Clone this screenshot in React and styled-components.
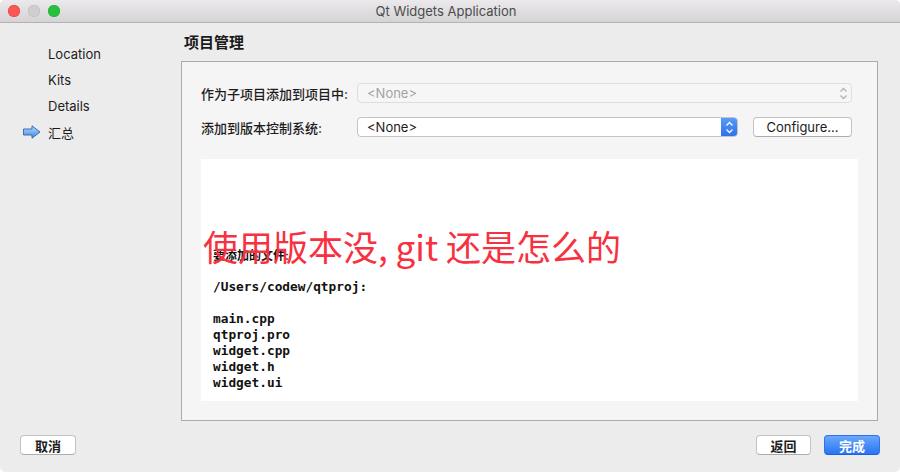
import React from "react";
import styled, { createGlobalStyle } from "styled-components";

const GlobalStyle = createGlobalStyle`
  html, body {
    margin: 0;
    padding: 0;
    background: #ffffff;
  }
  body {
    font-family: "Inter", "Noto Sans CJK SC", sans-serif;
    font-size: 13px;
    color: #1c1c1c;
  }
`;

const Window = styled.div`
  width: 900px;
  height: 472px;
  display: flex;
  flex-direction: column;
  background: #ececec;
  border-radius: 5px;
  overflow: hidden;
`;

const TitleBar = styled.div`
  height: 22px;
  flex: none;
  display: flex;
  align-items: center;
  background: linear-gradient(#ebe9eb, #d5d3d5);
  border-bottom: 1px solid #b3b1b3;
`;

const Lights = styled.div`
  display: flex;
  gap: 8px;
  padding-left: 8px;
`;

const Light = styled.span`
  width: 12px;
  height: 12px;
  border-radius: 50%;
  background: ${({ color }) => color};
  box-shadow: inset 0 0 0 0.5px ${({ edge }) => edge};
`;

const Title = styled.div`
  flex: 1;
  text-align: center;
  margin-right: 68px;
  color: #4b4b4b;
  font-size: 13px;
`;

const Main = styled.div`
  flex: 1;
  display: flex;
  min-height: 0;
`;

const Sidebar = styled.div`
  width: 181px;
  flex: none;
  padding-top: 18px;
  display: flex;
  flex-direction: column;
`;

const NavItem = styled.div`
  height: 26px;
  display: flex;
  align-items: center;
`;

const NavMarker = styled.div`
  width: 48px;
  display: flex;
  padding-left: 23px;
  box-sizing: border-box;
`;

const Content = styled.div`
  flex: 1;
  display: flex;
  flex-direction: column;
  margin-right: 22px;
`;

const Heading = styled.div`
  height: 20px;
  line-height: 20px;
  padding: 10px 0 0 3px;
  margin-bottom: 8px;
  font-size: 15px;
  font-weight: 700;
  color: #1a1a1a;
`;

const Panel = styled.div`
  height: 361px;
  box-sizing: border-box;
  border: 1px solid #ababab;
  background: #f5f5f5;
  padding: 21px 19px 19px 19px;
  display: flex;
  flex-direction: column;
`;

const FormRow = styled.div`
  display: flex;
  align-items: center;
  height: 20px;
  margin-bottom: ${({ last }) => (last ? "22px" : "14px")};
  padding-right: 6px;
`;

const Label = styled.div`
  width: 156px;
  flex: none;
  font-weight: 500;
  color: #1c1c1c;
`;

const Combo = styled.div`
  flex: ${({ width }) => (width ? "none" : 1)};
  width: ${({ width }) => (width ? `${width}px` : "auto")};
  height: 20px;
  box-sizing: border-box;
  display: flex;
  align-items: center;
  border-radius: 4px;
  border: 1px solid ${({ disabled }) => (disabled ? "#dedede" : "#c4c4c4")};
  background: ${({ disabled }) => (disabled ? "#f6f6f6" : "#ffffff")};
  color: ${({ disabled }) => (disabled ? "#a3a3a3" : "#1c1c1c")};
  overflow: hidden;
`;

const ComboText = styled.span`
  flex: 1;
  padding-left: 9px;
`;

const Stepper = styled.span`
  width: 17px;
  height: 20px;
  flex: none;
  display: flex;
  align-items: center;
  justify-content: center;
  margin-right: -1px;
  background: ${({ active }) =>
    active ? "linear-gradient(#5b9cf9, #2a6ff0)" : "transparent"};
`;

const Button = styled.button`
  height: 20px;
  padding: 0;
  width: ${({ w }) => w}px;
  box-sizing: border-box;
  font-family: inherit;
  font-size: 13px;
  font-weight: ${({ cjk }) => (cjk ? 600 : 400)};
  color: ${({ primary }) => (primary ? "#ffffff" : "#1c1c1c")};
  border-radius: 4px;
  border: 1px solid ${({ primary }) => (primary ? "#2d72ee" : "#c3c3c3")};
  border-bottom-color: ${({ primary }) => (primary ? "#1d5fe0" : "#adadad")};
  background: ${({ primary }) =>
    primary ? "linear-gradient(#6aa8fa, #2a74f4)" : "#ffffff"};
  margin-left: ${({ ml }) => ml || 0}px;
`;

const TextArea = styled.div`
  flex: 1;
  background: #ffffff;
  padding: 89px 0 0 12px;
  position: relative;
`;

const FilesCaption = styled.div`
  font-size: 12px;
  line-height: 16px;
  font-weight: 600;
  color: #111;
  margin-bottom: 15px;
`;

const FileList = styled.pre`
  margin: 0;
  font-family: "DejaVu Sans Mono", monospace;
  font-size: 12.8px;
  line-height: 16px;
  font-weight: 600;
  color: #111;
`;

const Annotation = styled.div`
  position: absolute;
  left: 2px;
  top: 66px;
  font-family: "Noto Sans CJK SC", sans-serif;
  font-size: 35px;
  line-height: 42px;
  color: #f7313f;
  white-space: nowrap;
`;

const Footer = styled.div`
  height: 51px;
  flex: none;
  display: flex;
  align-items: flex-start;
  padding: 14px 20px 0 20px;
  box-sizing: border-box;
`;

const Spacer = styled.div`
  flex: 1;
`;

function Arrow() {
  return (
    <svg width="18" height="14" viewBox="0 0 18 14">
      <defs>
        <linearGradient id="arr" x1="0" y1="0" x2="0" y2="1">
          <stop offset="0" stopColor="#bcdcfb" />
          <stop offset="1" stopColor="#3f86e2" />
        </linearGradient>
      </defs>
      <path
        d="M0.5 4 H9 V0.8 L17 7 L9 13.2 V10 H0.5 Z"
        fill="url(#arr)"
        stroke="#3a6db5"
        strokeWidth="1"
        strokeLinejoin="round"
      />
    </svg>
  );
}

function Chevrons({ color }) {
  return (
    <svg width="9" height="13" viewBox="0 0 9 13">
      <path
        d="M1.5 4.5 L4.5 1.5 L7.5 4.5 M1.5 8.5 L4.5 11.5 L7.5 8.5"
        fill="none"
        stroke={color}
        strokeWidth="1.3"
      />
    </svg>
  );
}

const navItems = ["Location", "Kits", "Details", "汇总"];
const files = `/Users/codew/qtproj:

main.cpp
qtproj.pro
widget.cpp
widget.h
widget.ui`;

export default function App() {
  return (
    <>
      <GlobalStyle />
      <Window>
        <TitleBar>
          <Lights>
            <Light color="#fc5753" edge="#de3f3a" />
            <Light color="#d0cfd0" edge="#b9b8b9" />
            <Light color="#27c13f" edge="#1aab2c" />
          </Lights>
          <Title>Qt Widgets Application</Title>
        </TitleBar>
        <Main>
          <Sidebar>
            {navItems.map((item, i) => (
              <NavItem key={item}>
                <NavMarker>{i === navItems.length - 1 && <Arrow />}</NavMarker>
                {item}
              </NavItem>
            ))}
          </Sidebar>
          <Content>
            <Heading>项目管理</Heading>
            <Panel>
              <FormRow>
                <Label>作为子项目添加到项目中:</Label>
                <Combo disabled>
                  <ComboText>&lt;None&gt;</ComboText>
                  <Stepper>
                    <Chevrons color="#b3b3b3" />
                  </Stepper>
                </Combo>
              </FormRow>
              <FormRow last>
                <Label>添加到版本控制系统:</Label>
                <Combo width={381}>
                  <ComboText>&lt;None&gt;</ComboText>
                  <Stepper active>
                    <Chevrons color="#ffffff" />
                  </Stepper>
                </Combo>
                <Button w={99} ml={15}>
                  Configure...
                </Button>
              </FormRow>
              <TextArea>
                <FilesCaption>要添加的文件:</FilesCaption>
                <FileList>{files}</FileList>
                <Annotation>使用版本没, git 还是怎么的</Annotation>
              </TextArea>
            </Panel>
          </Content>
        </Main>
        <Footer>
          <Button w={56} cjk>
            取消
          </Button>
          <Spacer />
          <Button w={55} cjk>
            返回
          </Button>
          <Button w={56} ml={13} primary cjk>
            完成
          </Button>
        </Footer>
      </Window>
    </>
  );
}
